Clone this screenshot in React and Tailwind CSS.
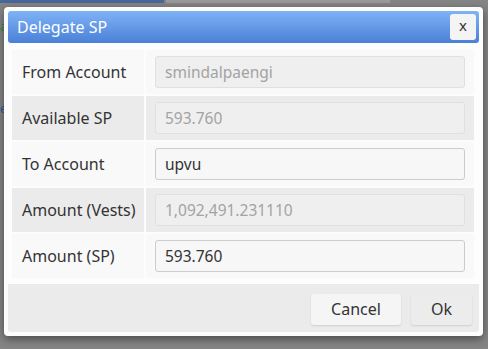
import React from 'react'

const rows = [
  { label: 'From Account', value: 'smindalpaengi', disabled: true },
  { label: 'Available SP', value: '593.760', disabled: true },
  { label: 'To Account', value: 'upvu', disabled: false },
  { label: 'Amount (Vests)', value: '1,092,491.231110', disabled: true },
  { label: 'Amount (SP)', value: '593.760', disabled: false },
]

const App = () => {
  return (
    <main className="relative w-[488px] h-[349px] overflow-hidden bg-[#858585] font-['Noto_Sans',sans-serif] pt-[7px] pl-[4px]">
      <div className="absolute top-0 left-0 h-[3px] w-[164px] bg-[#46689c]"></div>
      <div className="absolute top-0 left-[166px] h-[3px] w-[224px] bg-[#9a9a9a]"></div>
      <span className="absolute left-0 top-[20px] text-[13px] text-[#2f8a3a] leading-none">a</span>
      <span className="absolute left-0 top-[103px] text-[12px] text-[#2a5c9a] leading-none">e</span>

      <section className="relative flex flex-col w-[479px] h-[329px] bg-[#fdfdfd] rounded-[4px] p-[4px] shadow-[0_3px_10px_rgba(0,0,0,0.45)]">
        <header className="flex justify-between items-center h-[32px] pl-[9px] pr-[3px] rounded-[3px] bg-gradient-to-b from-[#7fb3f7] to-[#4a80d7]">
          <h1 className="text-white text-[16px]">Delegate SP</h1>
          <button className="w-[26px] h-[26px] rounded-[3px] bg-[#f4f4f4] text-[#333] text-[15px] leading-none pb-[2px]">x</button>
        </header>

        <div className="flex flex-col gap-[2px] pt-[7px] pl-[4px] pr-[5px] pb-[5px]">
          {rows.map((r, i) => (
            <div key={r.label} className="flex h-[44px] gap-[2px]">
              <div className={`flex items-center w-[132px] pl-[10px] text-[16px] text-[#333] ${i % 2 ? 'bg-[#ebebeb]' : 'bg-[#f9f9f9]'}`}>
                {r.label}
              </div>
              <div className={`flex-grow flex items-center px-[9px] ${i % 2 ? 'bg-[#ebebeb]' : 'bg-[#f9f9f9]'}`}>
                <input
                  readOnly
                  value={r.value}
                  className={
                    r.disabled
                      ? 'w-full h-[32px] px-[9px] rounded-[3px] border border-[#e0e0e0] bg-[#efefef] text-[15.5px] text-[#a3a3a3] outline-none'
                      : 'w-full h-[32px] px-[9px] rounded-[3px] border border-[#cccccc] bg-[#f7f7f7] text-[15.5px] text-[#333] outline-none'
                  }
                />
              </div>
            </div>
          ))}
        </div>

        <footer className="flex justify-end gap-[10px] h-[50px] pt-[10px] pr-[7px] bg-[#ebebeb] rounded-b-[3px] border-t border-white">
          <button className="w-[90px] h-[31px] rounded-[3px] bg-[#f5f5f5] text-[16px] text-[#333] shadow-[0_1px_2px_rgba(0,0,0,0.12)]">Cancel</button>
          <button className="w-[61px] h-[31px] rounded-[3px] bg-[#ececec] text-[16px] text-[#333] shadow-[0_1px_2px_rgba(0,0,0,0.12)]">Ok</button>
        </footer>
      </section>
    </main>
  )
}

export default App
